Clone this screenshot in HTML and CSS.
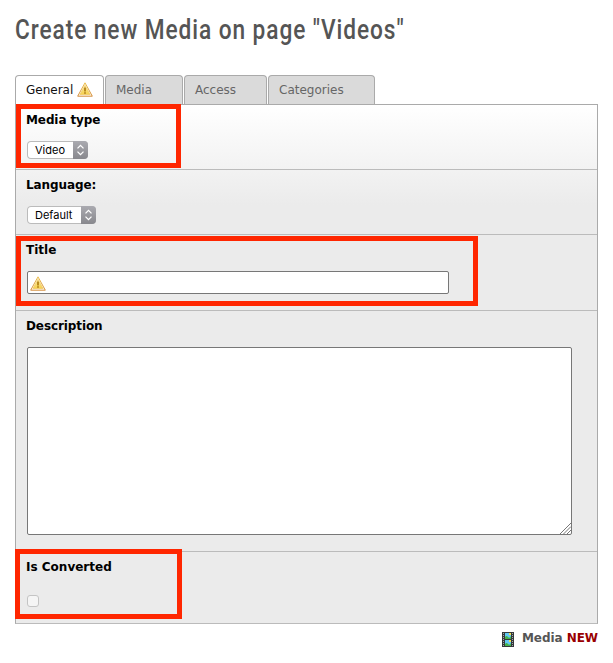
FILE: index.html
```
<!DOCTYPE html>
<html lang="en">
<head>
<meta charset="utf-8">
<title>Create new Media</title>
<link rel="stylesheet" href="styles.css">
</head>
<body>
<svg class="defs" width="0" height="0">
  <defs>
    <linearGradient id="gold" x1="0" y1="0" x2="0" y2="1"><stop offset="0" stop-color="#fff0a0"/><stop offset="1" stop-color="#f5cf4c"/></linearGradient>
    <linearGradient id="rim" x1="0" y1="0" x2="0" y2="1"><stop offset="0" stop-color="#ecc050"/><stop offset="1" stop-color="#d28a38"/></linearGradient>
    <symbol id="warning" viewBox="0 0 16 15">
      <path d="M8 .8 15.3 14.2H.7Z" fill="#fffaf0" stroke="url(#rim)" stroke-linejoin="round"/>
      <path d="M8 3.3 13 12.5H3Z" fill="url(#gold)" stroke="#efc75d" stroke-width=".7"/>
      <path d="M7 5.5h2v4H7zM7 10.2h2v1.6H7z" fill="#b98a20"/>
    </symbol>
    <symbol id="stepper" viewBox="0 0 15 18">
      <path d="m4.5 7.4 3-3 3 3M4.5 10.6l3 3 3-3" fill="none" stroke="#fff" stroke-width="1.3"/>
    </symbol>
  </defs>
</svg>
<main class="page">
  <h1 class="heading"><span class="heading-text">Create new Media on page "Videos"</span></h1>
  <nav class="tabs">
    <a class="tab tab-general active">General <svg class="warn"><use href="#warning"/></svg></a>
    <a class="tab tab-media">Media</a>
    <a class="tab tab-access">Access</a>
    <a class="tab tab-categories">Categories</a>
  </nav>
  <section class="panel">
    <div class="row row-type">
      <div class="label">Media type</div>
      <div class="select select-video"><span class="value">Video</span><svg class="arrows"><use href="#stepper"/></svg></div>
      <div class="mark mark-type"></div>
    </div>
    <div class="row row-language">
      <div class="label">Language:</div>
      <div class="select select-default"><span class="value">Default</span><svg class="arrows"><use href="#stepper"/></svg></div>
    </div>
    <div class="row row-title">
      <div class="label">Title</div>
      <div class="input"><svg class="warn"><use href="#warning"/></svg></div>
      <div class="mark mark-title"></div>
    </div>
    <div class="row row-description">
      <div class="label">Description</div>
      <div class="textarea"><svg class="grip" viewBox="0 0 11 11"><path d="M0 11 11 0M3.5 11 11 3.5M7 11l4-4" fill="none" stroke="#777"/></svg></div>
    </div>
    <div class="row row-converted">
      <div class="label">Is Converted</div>
      <div class="checkbox"></div>
      <div class="mark mark-converted"></div>
    </div>
  </section>
  <footer class="footer">
    <svg class="film" viewBox="0 0 12 15">
      <path d="M0 0h12v15H0z" fill="#35383a"/>
      <path d="M3 1h6v6H3zM3 8h6v6H3z" fill="#62c8f4"/>
      <path d="M3 5q1.5-2 3 0t3-1v3H3zM3 12q1.5-2 3 0t3-1v3H3z" fill="#45b34a"/>
      <path d="M7 1h2v2H7zM7 8h2v2H7z" fill="#f1df52"/>
      <path d="M1.5 1v14M10.5 1v14" stroke="#a4a8a8" stroke-width="1" stroke-dasharray="1 1"/>
    </svg>
    <span>Media <b class="new">NEW</b></span>
  </footer>
</main>
</body>
</html>
```
FILE: styles.css
```
* { box-sizing: border-box; }
body { margin: 0; background: #fff; color: #000; font-family: "DejaVu Sans", Verdana, sans-serif; font-size: 12px; }
.defs { position: absolute; }
.page { width: 613px; height: 663px; padding: 12px 15px 0; }
.heading { height: 63px; margin: 0; color: #555; font: 500 27px/37px Roboto, sans-serif; white-space: nowrap; }
.heading-text { display: inline-block; letter-spacing: 1.1px; transform: scaleX(.84); transform-origin: left; }
.tabs { display: flex; gap: 1px; height: 29px; }
.tab { height: 29px; padding-left: 10px; border: 1px solid #aaa; border-bottom: 0; border-radius: 4px 4px 0 0; background: #dadada; color: #666; line-height: 28px; white-space: nowrap; }
.tab.active { display: flex; gap: 4px; height: 30px; background: #fff; color: #111; z-index: 1; }
.tab-general { width: 89px; }
.tab-media { width: 78px; }
.tab-access { width: 83px; }
.tab-categories { width: 107px; }
.warn { width: 16px; height: 15px; flex: none; }
.tab .warn { margin-top: 6px; }
.panel { width: 583px; height: 520px; border: 1px solid #aaa; border-bottom-color: #bbb; background: linear-gradient(#fff, #ebebeb 100px); }
.row { position: relative; padding: 7px 0 0 11px; border-bottom: 1px solid #bbb; }
.row-type, .row-language { height: 65px; }
.row-title { height: 76px; }
.row-description { height: 241px; }
.row-converted { height: 71px; border-bottom: 0; }
.label { height: 16px; margin-left: -1px; font-weight: bold; line-height: 16px; }
.row-type .label, .row-language .label, .row-description .label { letter-spacing: -.1px; }
.select { display: flex; height: 18px; margin-top: 13px; border-radius: 4px; overflow: hidden; background: #fff; box-shadow: inset 0 0 0 1px #bbb; font: 11px/18px Inter, sans-serif; }
.select-video { width: 61px; }
.select-default { width: 69px; }
.value { flex: 1; padding-left: 8px; }
.arrows { width: 15px; height: 18px; background: linear-gradient(#aaaab0, #88888d); }
.input { width: 422px; height: 23px; margin-top: 13px; padding: 4px 2px; border: 1px solid #777; border-radius: 2px; background: #fff; }
.input .warn { display: block; }
.textarea { display: flex; align-items: flex-end; justify-content: flex-end; width: 545px; height: 188px; margin-top: 13px; border: 1px solid #777; border-radius: 2px; background: #fff; }
.grip { width: 11px; height: 11px; }
.checkbox { width: 12px; height: 12px; margin-top: 20px; border: 1px solid #c4c4c4; border-radius: 3px; background: #f5f5f5; }
.mark { position: absolute; z-index: 2; border: 5px solid #ff2600; }
.mark-type { left: 0; top: -1px; width: 165px; height: 64px; }
.mark-title { left: 0; top: 1px; width: 462px; height: 70px; }
.mark-converted { left: -1px; top: -3px; width: 167px; height: 70px; }
.footer { display: flex; justify-content: flex-end; gap: 8px; width: 583px; padding-top: 6px; color: #555; font-weight: bold; line-height: 16px; letter-spacing: -.05px; }
.film { width: 12px; height: 15px; margin-top: 2px; }
.new { color: #900; }
```
